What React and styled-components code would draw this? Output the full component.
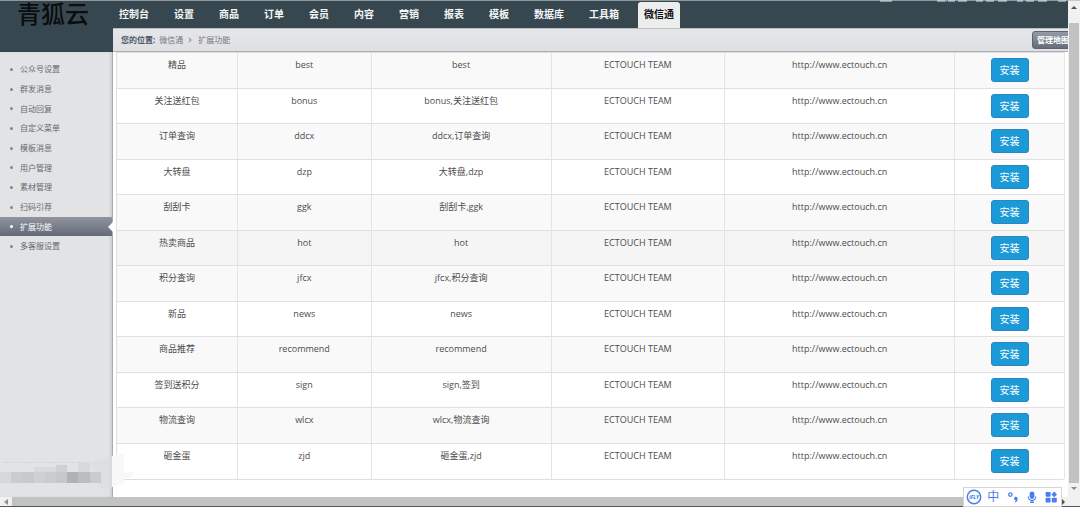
import React from "react";
import styled, { createGlobalStyle } from "styled-components";

const NAV = [
  "控制台",
  "设置",
  "商品",
  "订单",
  "会员",
  "内容",
  "营销",
  "报表",
  "模板",
  "数据库",
  "工具箱",
  "微信通",
];

const MENU = [
  "公众号设置",
  "群发消息",
  "自动回复",
  "自定义菜单",
  "模板消息",
  "用户管理",
  "素材管理",
  "扫码引荐",
  "扩展功能",
  "多客服设置",
];

const PLUGINS = [
  { name: "精品", code: "best", keywords: "best" },
  { name: "关注送红包", code: "bonus", keywords: "bonus,关注送红包" },
  { name: "订单查询", code: "ddcx", keywords: "ddcx,订单查询" },
  { name: "大转盘", code: "dzp", keywords: "大转盘,dzp" },
  { name: "刮刮卡", code: "ggk", keywords: "刮刮卡,ggk" },
  { name: "热卖商品", code: "hot", keywords: "hot", hovered: true },
  { name: "积分查询", code: "jfcx", keywords: "jfcx,积分查询" },
  { name: "新品", code: "news", keywords: "news" },
  { name: "商品推荐", code: "recommend", keywords: "recommend" },
  { name: "签到送积分", code: "sign", keywords: "sign,签到" },
  { name: "物流查询", code: "wlcx", keywords: "wlcx,物流查询" },
  { name: "砸金蛋", code: "zjd", keywords: "砸金蛋,zjd" },
];

// relative widths, the fixed table layout stretches them to the full width
const COLUMNS = [60, 67, 90, 87, 115, 55];

function Header() {
  return (
    <HeaderBar>
      <Logo>青狐云</Logo>
      <HeaderMain>
        <Nav>
          {NAV.map((item) => (
            <NavLink key={item} href="#" $active={item === "微信通"}>
              {item}
            </NavLink>
          ))}
        </Nav>
        <Toolbar>
          <Breadcrumb>
            <strong>您的位置:</strong>
            <a href="#">微信通</a>
            <Chevron viewBox="0 0 5 6">
              <path d="M1 1l2 2-2 2" fill="none" stroke="#9a9da2" strokeWidth="1.3" />
            </Chevron>
            <a href="#">扩展功能</a>
          </Breadcrumb>
          <MapSlot>
            <MapButton type="button">管理地图</MapButton>
          </MapSlot>
        </Toolbar>
      </HeaderMain>
      <CutText viewBox="0 0 188 2">
        <path
          d="M0 1h12M57 1h8M68 1h7M78 1h9M96 1h7M106 1h8M118 1h9M137 1h6M146 1h8M158 1h9M178 1h8"
          stroke="#e8ecee"
          strokeWidth="1"
        />
        <path d="M65 1h2M137 1h1M179 1h2" stroke="#7fb5d8" strokeWidth="1" />
      </CutText>
    </HeaderBar>
  );
}

function Sidebar() {
  return (
    <Side>
      <SideList>
        {MENU.map((item) => (
          <SideItem key={item} $active={item === "扩展功能"}>
            <a href="#">{item}</a>
          </SideItem>
        ))}
      </SideList>
    </Side>
  );
}

function PluginTable() {
  return (
    <Table>
      <colgroup>
        {COLUMNS.map((width, i) => (
          <col key={i} style={{ width }} />
        ))}
      </colgroup>
      <tbody>
        {PLUGINS.map((plugin) => (
          <Row key={plugin.code} $hovered={plugin.hovered}>
            <Cell>{plugin.name}</Cell>
            <Cell>{plugin.code}</Cell>
            <Cell>{plugin.keywords}</Cell>
            <Cell>ECTOUCH TEAM</Cell>
            <Cell>http://www.ectouch.cn</Cell>
            <Cell>
              <InstallButton type="button">安装</InstallButton>
            </Cell>
          </Row>
        ))}
      </tbody>
    </Table>
  );
}

function InputMethodBar() {
  return (
    <ImeBar>
      <ImeIcon viewBox="0 0 16 16">
        <circle cx="8" cy="8" r="6.7" fill="none" stroke="#4a7df0" strokeWidth="1.5" />
        <text
          x="8"
          y="10"
          textAnchor="middle"
          fontSize="5"
          fontWeight="700"
          fontStyle="italic"
          fill="#3f6fe0"
        >
          iFLY
        </text>
      </ImeIcon>
      <ImeLang type="button">中</ImeLang>
      <ImeIcon viewBox="0 0 16 16">
        <circle cx="5.4" cy="5.6" r="1.7" fill="none" stroke="#4a7df0" strokeWidth="1.3" />
        <path
          d="M10.4 7.8a2.1 2.1 0 0 1 2.2 2.2c0 1.7-.9 2.9-2.3 3.5l-.5-.7c.7-.4 1-.9 1-1.3A1.9 1.9 0 0 1 10.4 7.8z"
          fill="#4a7df0"
        />
      </ImeIcon>
      <ImeIcon viewBox="0 0 16 16">
        <rect x="5.6" y="2.4" width="4.8" height="7.6" rx="2.4" fill="#4a7df0" />
        <path
          d="M4.2 7.6a3.8 3.8 0 0 0 7.6 0M8 11.4v2M6 13.4h4"
          fill="none"
          stroke="#4a7df0"
          strokeWidth="1.1"
        />
      </ImeIcon>
      <ImeIcon viewBox="0 0 16 16">
        <g fill="#4a7df0">
          <rect x="2.6" y="3" width="5" height="4.8" rx="0.8" />
          <path d="M11.2 2.6L14 5.4l-2.8 2.8-2.8-2.8z" />
          <rect x="2.6" y="8.8" width="5" height="4.8" rx="0.8" />
          <rect x="8.8" y="8.8" width="5" height="4.8" rx="0.8" />
        </g>
      </ImeIcon>
    </ImeBar>
  );
}

// censored strip over the browser's link preview
function Mosaic() {
  return (
    <MosaicArt viewBox="0 0 136 40">
      <path d="M90 10L112 3v31l-10 3z" fill="#dcdddf" opacity="0.7" />
      <path d="M112 3l12-3v30l-12 4zM124 19h10l-4 6h-6z" fill="#f8f8f8" />
      <g>
        <rect x="34" y="14" width="22" height="6" fill="#d9dadc" />
        <rect x="56" y="12" width="11" height="8" fill="#cfd0d2" />
        <rect x="78" y="10" width="12" height="10" fill="#d8d9da" />
        <rect x="0" y="19" width="11" height="11" fill="#d7d8d9" />
        <rect x="11" y="19" width="11" height="11" fill="#cbcccd" />
        <rect x="22" y="19" width="12" height="11" fill="#c8c9ca" />
        <rect x="34" y="19" width="11" height="11" fill="#cfd0d1" />
        <rect x="45" y="19" width="11" height="11" fill="#cbcccd" />
        <rect x="56" y="19" width="11" height="11" fill="#c6c7c8" />
        <rect x="67" y="19" width="11" height="11" fill="#b0b1b3" />
        <rect x="78" y="19" width="12" height="11" fill="#bcbdbe" />
        <rect x="90" y="19" width="11" height="11" fill="#cacbcc" />
      </g>
      <path d="M3 9.5h87" stroke="#d3d5d7" strokeDasharray="2 1" />
    </MosaicArt>
  );
}

function App() {
  return (
    <Screen>
      <GlobalStyle />
      <Upper>
        <Page>
          <Header />
          <Columns>
            <Sidebar />
            <Content>
              <PluginTable />
            </Content>
          </Columns>
        </Page>
        <VScroll>
          <Arrow viewBox="0 0 12 12">
            <path d="M3 8l3-3 3 3z" fill="#505050" />
          </Arrow>
          <VThumb />
          <Arrow viewBox="0 0 12 12">
            <path d="M3 4h6L6 7z" fill="#8a8a8a" />
          </Arrow>
        </VScroll>
      </Upper>
      <HScroll>
        <Arrow viewBox="0 0 12 10">
          <path d="M8 2v6L4 5z" fill="#8a8f98" />
        </Arrow>
        <HThumb />
        <Arrow viewBox="0 0 12 10">
          <path d="M6 2v6l3-3z" fill="#505050" />
        </Arrow>
        <Corner />
      </HScroll>
      <Mosaic />
      <InputMethodBar />
    </Screen>
  );
}

export default App;

const GlobalStyle = createGlobalStyle`
  * {
    box-sizing: border-box;
  }
  body {
    margin: 0;
    background: #fff;
    font-family: "Open Sans", "Noto Sans CJK SC", sans-serif;
    font-size: 9px;
    color: #4c4c4c;
  }
  a {
    color: inherit;
    text-decoration: none;
  }
  button {
    font-family: inherit;
    padding: 0;
    border: 0;
    white-space: nowrap;
  }
`;
const Screen = styled.div`
  position: relative;
  display: flex;
  flex-direction: column;
  min-height: 100vh;
`;
const Upper = styled.div`
  flex: 1;
  display: flex;
`;
const Page = styled.div`
  flex: 1;
  min-width: 0;
  display: flex;
  flex-direction: column;
`;
const HeaderBar = styled.header`
  position: relative;
  display: flex;
  height: 52px;
  background: #37474f;
  border-top: 1px solid #8d979c;
`;
const Logo = styled.div`
  flex: none;
  width: 113px;
  padding-left: 17px;
  font-family: "Noto Sans CJK SC", sans-serif;
  font-size: 24px;
  line-height: 24px;
  font-weight: 500;
  color: #0b0d0e;
`;
const HeaderMain = styled.div`
  flex: 1;
  min-width: 0;
  display: flex;
  flex-direction: column;
`;
const Nav = styled.nav`
  display: flex;
  gap: 13px;
  height: 27px;
  padding-top: 1px;
`;
const NavLink = styled.a`
  padding: 0 6px;
  border-radius: 3px 3px 0 0;
  font-size: 10px;
  line-height: 25px;
  font-weight: 700;
  color: ${(props) => (props.$active ? "#111" : "#f4f6f7")};
  background: ${(props) => (props.$active ? "#eceeee" : "transparent")};
`;
const Toolbar = styled.div`
  display: flex;
  flex: 1;
  align-items: center;
  padding-left: 8px;
  background: linear-gradient(#e5e6e9, #dfe0e3);
  border-top: 1px solid #b9bdc1;
  border-bottom: 1px solid #acaeb2;
`;
const Breadcrumb = styled.div`
  flex: 1;
  display: flex;
  align-items: center;
  font-size: 8px;
  line-height: 16px;
  color: #73777e;
  strong {
    margin-right: 4px;
    color: #4d5666;
  }
`;
const Chevron = styled.svg`
  width: 5px;
  height: 6px;
  margin: 0 5px;
`;
const MapSlot = styled.div`
  flex: none;
  width: 36px;
  overflow: hidden;
`;
const MapButton = styled.button`
  display: block;
  width: 42px;
  height: 18px;
  border: 1px solid #5d636f;
  border-radius: 3px;
  background: linear-gradient(#959aa5, #666c79);
  color: #fff;
  font-size: 8px;
  line-height: 16px;
  font-weight: 700;
`;
const CutText = styled.svg`
  position: absolute;
  top: -1px;
  right: 0;
  width: 188px;
  height: 2px;
`;
const Columns = styled.div`
  flex: 1;
  display: flex;
`;
const Side = styled.aside`
  flex: none;
  width: 113px;
  background: #e1e3e5;
  border-right: 1px solid #a9abb1;
  box-shadow: inset -2px 0 2px #cfd1d5;
`;
const SideList = styled.ul`
  list-style: none;
  margin: 0;
  padding: 7px 0 0;
`;
const SideItem = styled.li`
  display: flex;
  align-items: center;
  position: relative;
  height: 20px;
  padding-left: 10px;
  font-size: 8px;
  line-height: 18px;
  color: ${(props) => (props.$active ? "#fff" : "#666a72")};
  background: ${(props) =>
    props.$active ? "linear-gradient(#9095a0, #636978)" : "none"};
  &:nth-child(3n) {
    height: 19px;
  }
  &::before {
    content: "";
    width: 3px;
    height: 3px;
    margin-right: 7px;
    border-radius: 50%;
    background: ${(props) => (props.$active ? "#fff" : "#80858e")};
  }
  &::after {
    content: "";
    display: ${(props) => (props.$active ? "block" : "none")};
    position: absolute;
    right: -1px;
    border: 5px solid transparent;
    border-left: 0;
    border-right-color: #fff;
  }
`;
const Content = styled.main`
  flex: 1;
  min-width: 0;
  padding: 0 3px 12px;
`;
const Table = styled.table`
  width: 100%;
  table-layout: fixed;
  border-spacing: 0;
  border: 1px solid #dfdfdf;
  border-right-color: #e6e6e6;
  border-radius: 0 0 3px 3px;
`;
const Row = styled.tr`
  height: 36px;
  background: #f9f9f9;
  &:nth-child(even) {
    height: 35px;
    background: ${(props) => (props.$hovered ? "#f5f5f5" : "#fff")};
  }
`;
const Cell = styled.td`
  padding: 5px 0 0;
  line-height: 14px;
  text-align: center;
  vertical-align: top;
  border-left: 1px solid #e4e4e4;
  border-bottom: 1px solid #e0e0e0;
  &:first-child {
    border-left: 0;
  }
  ${Row}:last-child & {
    border-bottom: 0;
  }
`;
const InstallButton = styled.button`
  display: block;
  width: 38px;
  height: 24px;
  margin: 0 auto;
  border: 1px solid #2a86bd;
  border-radius: 3px;
  background: #1c9ad8;
  color: #fff;
  font-size: 10px;
  line-height: 22px;
`;
const VScroll = styled.div`
  flex: none;
  width: 12px;
  display: flex;
  flex-direction: column;
  padding-bottom: 2px;
  background: #f1f1f1;
  border-top: 1px solid #c8c8c8;
`;
const Arrow = styled.svg`
  flex: none;
  width: 12px;
  height: 12px;
`;
const VThumb = styled.div`
  flex: 1;
  margin: 10px 1px 0;
  background: #c1c3c3;
`;
const HScroll = styled.div`
  flex: none;
  display: flex;
  align-items: center;
  height: 10px;
  background: #f1f1f1;
  border-bottom: 1px solid #55585b;
`;
const HThumb = styled.div`
  flex: 1;
  height: 9px;
  background: #c1c3c3;
`;
const Corner = styled.div`
  width: 12px;
`;
const MosaicArt = styled.svg`
  position: absolute;
  left: 0;
  bottom: 14px;
  width: 136px;
  height: 40px;
`;
const ImeBar = styled.div`
  position: absolute;
  right: 18px;
  bottom: 0;
  display: flex;
  align-items: center;
  justify-content: space-between;
  width: 99px;
  height: 20px;
  padding: 0 2px;
  background: #fff;
  border: 1px solid #d5d5d5;
`;
const ImeIcon = styled.svg`
  flex: none;
  width: 16px;
  height: 16px;
`;
const ImeLang = styled.button`
  width: 16px;
  background: none;
  color: #4a7df0;
  font-size: 12px;
  line-height: 18px;
`;
